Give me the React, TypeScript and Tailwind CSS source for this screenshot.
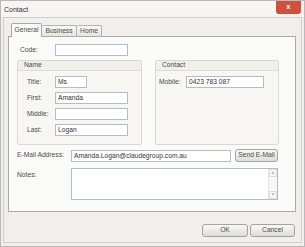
const font = "font-['Liberation_Sans','Arial',sans-serif]";

const inputClass =
  "h-[12px] border border-[#b7bcc4] bg-white px-[2px] text-[6.7px] leading-[10px] text-[#333] outline-none";

function Field({ value = "", width }: { value?: string; width: string }) {
  return <div className={`${inputClass} ${width}`}>{value}</div>;
}

function Row({
  label,
  labelWidth,
  children,
}: {
  label: string;
  labelWidth: string;
  children: React.ReactNode;
}) {
  return (
    <div className="flex items-center">
      <span className={`${labelWidth} shrink-0 text-[6.7px] text-[#4a4a4a]`}>
        {label}
      </span>
      {children}
    </div>
  );
}

function GroupBox({
  title,
  width,
  children,
}: {
  title: string;
  width: string;
  children: React.ReactNode;
}) {
  return (
    <div
      className={`${width} h-[85px] rounded-[2px] border border-[#d9d8d3] bg-[#f7f6f3]`}
    >
      <div className="flex h-[10px] items-center border-b border-[#dcdbd6] bg-[#f0efea] pl-[6px] text-[6.7px] text-[#4a4a4a]">
        {title}
      </div>
      {children}
    </div>
  );
}

function Button({ label, width }: { label: string; width: string }) {
  return (
    <div
      className={`${width} flex h-[13px] items-center justify-center rounded-[3px] border border-[#a3a3a0] bg-[linear-gradient(to_bottom,#f8f8f6,#dedcd6)] text-[6.7px] text-[#4a4a4a]`}
    >
      {label}
    </div>
  );
}

export default function App() {
  return (
    <div
      className={`${font} h-[247px] w-[305px] overflow-hidden border border-[#b9b9b9] bg-[#f0efeb]`}
    >
      {/* title bar */}
      <div className="flex h-[16px] items-start justify-between bg-[#f6f5f2]">
        <span className="pl-[3px] pt-[4px] text-[7px] text-[#333]">Contact</span>
        <div className="mr-[3px] flex h-[13px] w-[25px] items-center justify-center rounded-b-[3px] bg-[#d0503e] text-[7px] font-bold text-white">
          x
        </div>
      </div>

      {/* client frame */}
      <div className="mx-[2px] h-[226px] border border-[#cfcfcb] bg-[#f0efeb] px-[4px] pt-[5px]">
        {/* tabs */}
        <div className="flex h-[13px] items-end pl-[3px] text-[6.7px] text-[#4a4a4a]">
          <div className="relative z-10 -mb-px flex h-[14px] w-[31px] items-center justify-center rounded-t-[2px] border border-b-0 border-[#a9a8a3] bg-[#fafaf8]">
            General
          </div>
          <div className="flex h-[11px] w-[35px] items-center justify-center rounded-t-[2px] border border-l-0 border-b-0 border-[#b4b3ae] bg-[linear-gradient(to_bottom,#f8f8f6,#e6e5e0)]">
            Business
          </div>
          <div className="flex h-[11px] w-[25px] items-center justify-center rounded-t-[2px] border border-l-0 border-b-0 border-[#b4b3ae] bg-[linear-gradient(to_bottom,#f8f8f6,#e6e5e0)]">
            Home
          </div>
        </div>

        {/* tab page */}
        <div className="h-[176px] w-[288px] border border-[#a9a8a3] bg-[#fafaf8] pl-[8px] pt-[7px]">
          <Row label="Code:" labelWidth="w-[38px] pl-[3px]">
            <Field width="w-[73px]" />
          </Row>

          <div className="mt-[4px] flex gap-[13px]">
            <GroupBox title="Name" width="w-[125px]">
              <div className="flex flex-col gap-[4px] pl-[9px] pt-[5px]">
                <Row label="Title:" labelWidth="w-[28px]">
                  <Field value="Ms" width="w-[32px]" />
                </Row>
                <Row label="First:" labelWidth="w-[28px]">
                  <Field value="Amanda" width="w-[73px]" />
                </Row>
                <Row label="Middle:" labelWidth="w-[28px]">
                  <Field width="w-[73px]" />
                </Row>
                <Row label="Last:" labelWidth="w-[28px]">
                  <Field value="Logan" width="w-[73px]" />
                </Row>
              </div>
            </GroupBox>
            <GroupBox title="Contact" width="w-[124px]">
              <div className="pl-[3px] pt-[5px]">
                <Row label="Mobile:" labelWidth="w-[27px]">
                  <Field value="0423 783 087" width="w-[78px]" />
                </Row>
              </div>
            </GroupBox>
          </div>

          <div className="mt-[4px] flex items-center">
            <span className="w-[54px] text-[6.7px] text-[#4a4a4a]">E-Mail Address:</span>
            <Field value="Amanda.Logan@claudegroup.com.au" width="w-[160px]" />
            <div className="ml-[4px]">
              <Button label="Send E-Mail" width="w-[43px]" />
            </div>
          </div>

          <div className="mt-[6px] flex items-start">
            <span className="w-[54px] pt-[2px] text-[6.7px] text-[#4a4a4a]">Notes:</span>
            <div className="flex h-[32px] w-[207px] border border-[#b7bcc4] bg-white">
              <div className="flex-1" />
              <div className="flex w-[9px] flex-col justify-between border-l border-[#e4e4e4] bg-[#f7f7f7] text-[#b8b8b8]">
                <div className="flex h-[8px] items-center justify-center border border-[#dedede] text-[5px]">▲</div>
                <div className="flex h-[8px] items-center justify-center border border-[#dedede] text-[5px]">▼</div>
              </div>
            </div>
          </div>
        </div>

        {/* dialog buttons */}
        <div className="mt-[12px] flex justify-end gap-[2px] pr-[2px]">
          <Button label="OK" width="w-[46px]" />
          <Button label="Cancel" width="w-[45px]" />
        </div>
      </div>
    </div>
  );
}
